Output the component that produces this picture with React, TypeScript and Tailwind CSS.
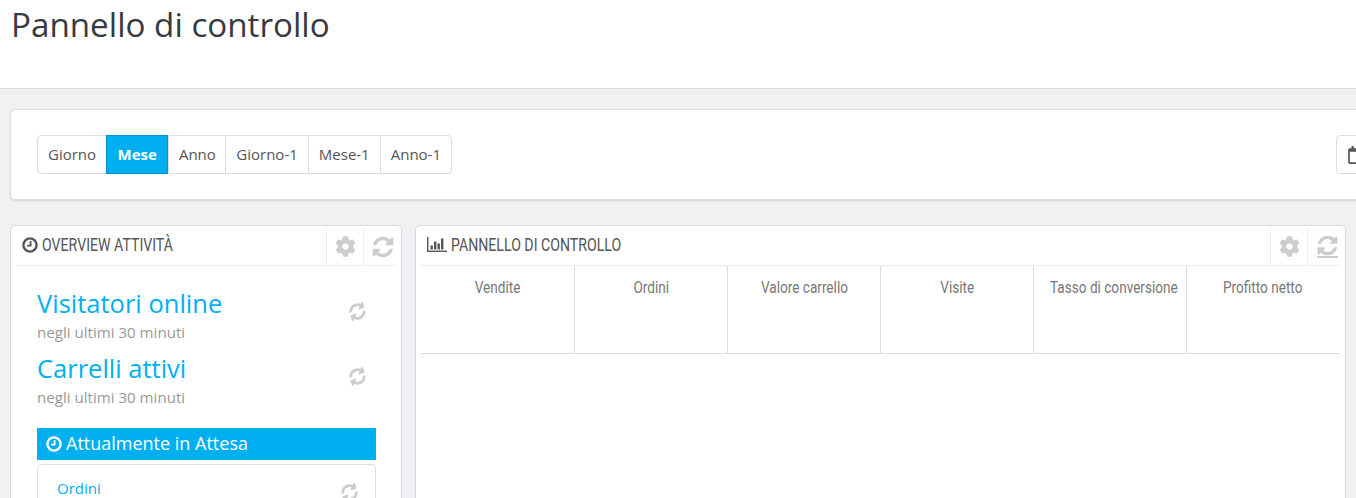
import { FaCog, FaRegCalendar } from "react-icons/fa";

const tabs = ["Giorno", "Mese", "Anno", "Giorno-1", "Mese-1", "Anno-1"];
const cols = ["Vendite", "Ordini", "Valore carrello", "Visite", "Tasso di conversione", "Profitto netto"];

function Refresh({ size, className }: { size: number; className?: string }) {
  return (
    <svg width={size} height={size} viewBox="0 0 1792 1792" fill="currentColor" className={className}>
      <path d="M1639 1056q0 5-1 7-64 268-268 434.500t-478 166.500q-146 0-282.500-55t-243.500-157l-129 129q-19 19-45 19t-45-19-19-45v-448q0-26 19-45t45-19h448q26 0 45 19t19 45-19 45l-137 137q71 66 161 102t187 36q134 0 250-65t186-179q11-17 53-117 8-23 30-23h192q13 0 22.500 9.500t9.500 22.500zm25-800v448q0 26-19 45t-45 19h-448q-26 0-45-19t-19-45 19-45l138-138q-148-137-349-137-134 0-250 65t-186 179q-11 17-53 117-8 23-30 23h-199q-13 0-22.500-9.500t-9.500-22.500v-7q65-268 270-434.500t480-166.500q146 0 284 55.500t245 156.500l130-129q19-19 45-19t45 19 19 45z" />
    </svg>
  );
}

function Clock({ size, className }: { size: number; className?: string }) {
  return (
    <svg width={size} height={size} viewBox="0 0 16 16" fill="none" stroke="currentColor" className={className}>
      <circle cx="8" cy="8" r="6.6" strokeWidth="2.4" />
      <path d="M8.6 4v4.6H5" strokeWidth="1.8" />
    </svg>
  );
}

function Bars() {
  return (
    <svg width="20" height="15" viewBox="0 0 20 15" className="shrink-0 text-[#555]" fill="currentColor">
      <rect x="0" y="0" width="1.4" height="15" />
      <rect x="0" y="13.6" width="20" height="1.4" />
      <rect x="3.5" y="8.5" width="2.4" height="4" />
      <rect x="7" y="4.5" width="2.4" height="8" />
      <rect x="10.5" y="6.5" width="2.4" height="6" />
      <rect x="14" y="1.5" width="2.4" height="11" />
    </svg>
  );
}

function PanelHead({ icon, title, underline }: { icon: React.ReactNode; title: string; underline?: boolean }) {
  return (
    <div className="mx-[5px] mt-[-1px] flex h-[41px] border-b border-[#eeeeee]">
      <div className="flex flex-1 items-center gap-[4px] pb-[1px] pl-[6px]">
        {icon}
        <span className="origin-left scale-x-[0.785] whitespace-nowrap text-[18px] text-[#555] [font-family:Roboto,sans-serif]">{title}</span>
      </div>
      <div className="mt-[3px] flex w-[37px] items-center justify-center border-l border-[#eeeeee] pl-[1px] text-[21px] text-[#cccccc]">
        <FaCog />
      </div>
      <div className="mr-[-4px] mt-[3px] flex w-[37px] items-center justify-center border-l border-[#eeeeee] pl-[2px] text-[#cccccc]">
        {underline ? (
          <div className="flex flex-col items-center">
            <Refresh size={23} className="-my-[1px]" />
            <div className="h-[2px] w-[21px] bg-[#cccccc]" />
          </div>
        ) : (
          <Refresh size={24} />
        )}
      </div>
    </div>
  );
}

function Stat({ title }: { title: string }) {
  return (
    <div className="flex items-center justify-between">
      <div>
        <div className="text-[25.5px] leading-[35px] text-[#00aff0]">{title}</div>
        <div className="mt-[1px] text-[15.1px] leading-[20px] text-[#999999]">negli ultimi 30 minuti</div>
      </div>
      <Refresh size={19} className="mb-[6px] mr-[9px] rotate-[-20deg] text-[#cccccc]" />
    </div>
  );
}

function tabClass(t: string) {
  if (t === "Mese") return "-my-[1px] flex items-center border border-[#0095d0] bg-[#00aff0] px-[10.5px] font-bold text-white";
  if (t === "Anno") return "flex items-center border-l border-[#dddddd] px-[9.5px]";
  return "flex items-center border-l border-[#dddddd] px-[10px] first:border-l-0";
}

export default function App() {
  return (
    <div className="h-[498px] w-[1356px] overflow-hidden bg-[#eff1f2] [font-family:'Open_Sans',sans-serif]">
      <div className="h-[89px] border-b border-[#dddddd] bg-white pl-[11px] pt-[4px] text-[33.2px] leading-[42px] text-[#363a41]">
        Pannello di controllo
      </div>

      <div className="ml-[10px] mt-[20px] flex h-[91px] w-[1400px] items-center justify-between rounded-[5px] border border-[#dcdfe1] bg-white pl-[26px] shadow-[0_1px_2px_rgba(0,0,0,0.12)]">
        <div className="flex h-[39px] rounded-[4px] border border-[#dddddd] text-[15px] text-[#555]">
          {tabs.map((t) => (
            <div key={t} className={tabClass(t)}>
              {t}
            </div>
          ))}
        </div>
        <div className="flex h-[39px] w-[73px] items-center rounded-[4px] border border-[#dddddd] pl-[10px] text-[18px] text-[#555]">
          <FaRegCalendar />
        </div>
      </div>

      <div className="ml-[10px] mt-[25px] flex gap-[13px]">
        <div className="h-[300px] w-[392px] shrink-0 rounded-[5px] border border-[#d3d8db] bg-white">
          <PanelHead icon={<Clock size={16} className="shrink-0 text-[#555]" />} title="OVERVIEW ATTIVITÀ" />
          <div className="pl-[26px] pr-[25px] pt-[20px]">
            <div className="flex flex-col gap-[9px]">
              <Stat title="Visitatori online" />
              <Stat title="Carrelli attivi" />
            </div>
            <div className="mt-[21px] flex h-[32px] items-center gap-[4px] bg-[#00aff0] pb-[1px] pl-[9px] text-[18px] text-white">
              <Clock size={16} />
              <span>Attualmente in Attesa</span>
            </div>
            <div className="mt-[4px] flex h-[80px] items-start justify-between rounded-[4px] border border-[#dddddd] pl-[19px] pr-[16px] pt-[12px] text-[15px] text-[#00aff0]">
              <span>Ordini</span>
              <Refresh size={19} className="mt-[6px] rotate-[-20deg] text-[#cccccc]" />
            </div>
          </div>
        </div>

        <div className="h-[300px] w-[931px] shrink-0 rounded-[5px] border border-[#d3d8db] bg-white">
          <PanelHead icon={<Bars />} title="PANNELLO DI CONTROLLO" underline />
          <div className="mx-[5px] grid h-[88px] grid-cols-[repeat(6,153px)] border-b border-[#dddddd]">
            {cols.map((c) => (
              <div key={c} className="border-l border-[#dddddd] pt-[9px] text-center first:border-l-0">
                <span className="inline-block scale-x-[0.8] whitespace-nowrap text-[17px] text-[#777] [font-family:Roboto,sans-serif]">{c}</span>
              </div>
            ))}
          </div>
        </div>
      </div>
    </div>
  );
}
